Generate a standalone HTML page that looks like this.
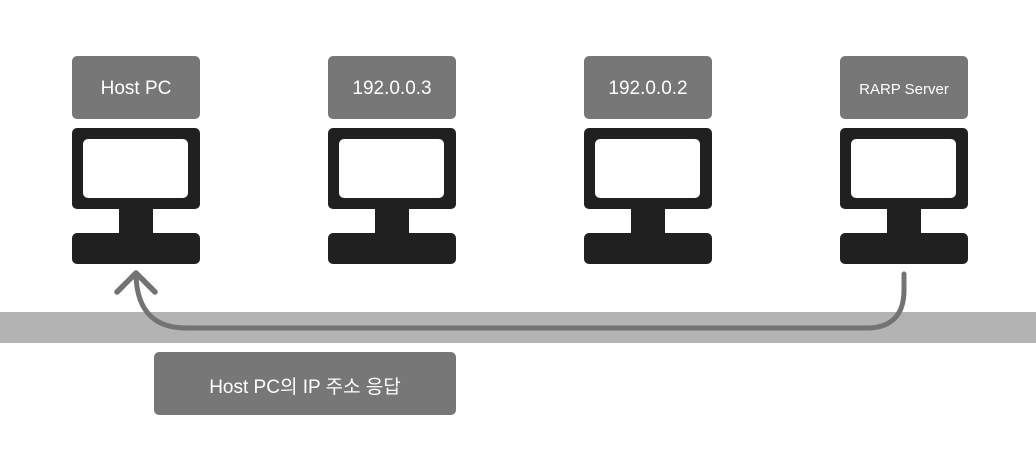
<!DOCTYPE html>
<html><head><meta charset="utf-8"><style>
html,body{margin:0;padding:0;background:#fff;}
body{width:1036px;height:470px;position:relative;overflow:hidden;font-family:"Liberation Sans","Noto Sans CJK KR",sans-serif;}
.lbl{position:absolute;top:56px;width:128px;height:60px;padding-top:3px;background:#777;border-radius:5px;color:#fff;display:flex;align-items:center;justify-content:center;font-size:19px;}
.mon{position:absolute;top:128px;width:128px;height:81px;background:#202020;border-radius:5px;}
.scr{position:absolute;left:11px;top:11px;width:105px;height:59px;background:#fff;border-radius:5px;}
.neck{position:absolute;top:208px;width:34px;height:26px;background:#202020;}
.base{position:absolute;top:233px;width:128px;height:31px;background:#202020;border-radius:5px;}
.band{position:absolute;left:0;top:312px;width:1036px;height:31px;background:#b3b3b3;}
.msg{position:absolute;left:154px;top:352px;width:302px;height:60px;padding-top:3px;background:#777;border-radius:5px;color:#fff;display:flex;align-items:center;justify-content:center;font-size:19px;}
</style></head><body>
<div class="band"></div>

<div class="lbl" style="left:72px">Host PC</div>
<div class="mon" style="left:72px"><div class="scr"></div></div>
<div class="neck" style="left:119px"></div>
<div class="base" style="left:72px"></div>

<div class="lbl" style="left:328px">192.0.0.3</div>
<div class="mon" style="left:328px"><div class="scr"></div></div>
<div class="neck" style="left:375px"></div>
<div class="base" style="left:328px"></div>

<div class="lbl" style="left:584px">192.0.0.2</div>
<div class="mon" style="left:584px"><div class="scr"></div></div>
<div class="neck" style="left:631px"></div>
<div class="base" style="left:584px"></div>

<div class="lbl" style="left:840px;font-size:15px">RARP Server</div>
<div class="mon" style="left:840px"><div class="scr"></div></div>
<div class="neck" style="left:887px"></div>
<div class="base" style="left:840px"></div>

<svg style="position:absolute;left:0;top:0" width="1036" height="470">
<path d="M904,274 V290 Q904,328 866,328 H186 Q138,328 136,276" fill="none" stroke="#737373" stroke-width="5" stroke-linecap="round"/>
<path d="M117,292 L136,273 L155,292" fill="none" stroke="#737373" stroke-width="5.5" stroke-linecap="round" stroke-linejoin="round"/>
</svg>

<div class="msg">Host PC의 IP 주소 응답</div>
</body></html>
